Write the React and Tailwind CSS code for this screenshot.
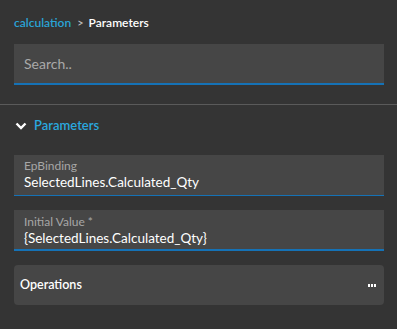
export default function App() {
  const font = { fontFamily: "Lato, 'Noto Sans', sans-serif" };
  return (
    <div className="w-[397px] h-[329px] bg-[#343434] overflow-hidden" style={font}>
      <div className="pl-[14px] pr-[13px] pt-[14px]">
        <div className="flex items-center h-[18px] text-[12px] font-semibold">
          <span className="text-[#2aa3d6]">calculation</span>
          <span className="text-[#bdbdbd] ml-[6px] mr-[5px] text-[11px]">&gt;</span>
          <span className="text-white">Parameters</span>
        </div>
        <div className="mt-[12px] h-[41px] bg-[#464646] border-b-2 border-[#1572b6] flex items-center px-[10px]">
          <span className="text-[#a9a9a9] text-[14px]">Search..</span>
        </div>
      </div>
      <div className="mt-[19px] h-px bg-[#5a5a5a]" />
      <div className="pl-[14px] pr-[13px]">
        <div className="flex items-center h-[20px] mt-[11px]">
          <svg width="12" height="8" viewBox="0 0 12 8" className="ml-[1px]">
            <path d="M1.5 1.5 L6 6 L10.5 1.5" stroke="#ffffff" strokeWidth="2.4" fill="none" />
          </svg>
          <span className="ml-[7px] text-[#2aa8df] text-[13px] font-semibold">Parameters</span>
        </div>
        <div className="mt-[19px] h-[41px] bg-[#464646] border-b border-[#1572b6] px-[10px] pt-[3px] flex flex-col">
          <span className="text-[#a6a6a6] text-[12px] leading-[16px]">EpBinding</span>
          <span className="text-white text-[13.5px] leading-[17px]">SelectedLines.Calculated_Qty</span>
        </div>
        <div className="mt-[14px] h-[41px] bg-[#464646] border-b-2 border-[#1572b6] px-[10px] pt-[4px] flex flex-col">
          <span className="text-[#a6a6a6] text-[12px] leading-[16px]">Initial Value *</span>
          <span className="text-white text-[13.5px] leading-[17px]">{"{SelectedLines.Calculated_Qty}"}</span>
        </div>
        <div className="mt-[14px] h-[40px] bg-[#464646] rounded-[4px] flex items-center justify-between pl-[6px] pr-[8px]">
          <span className="text-white text-[12.5px] font-semibold">Operations</span>
          <span className="flex gap-[1px]">
            <span className="w-[2px] h-[3px] bg-white" />
            <span className="w-[2px] h-[3px] bg-white" />
            <span className="w-[2px] h-[3px] bg-white" />
          </span>
        </div>
      </div>
    </div>
  );
}
